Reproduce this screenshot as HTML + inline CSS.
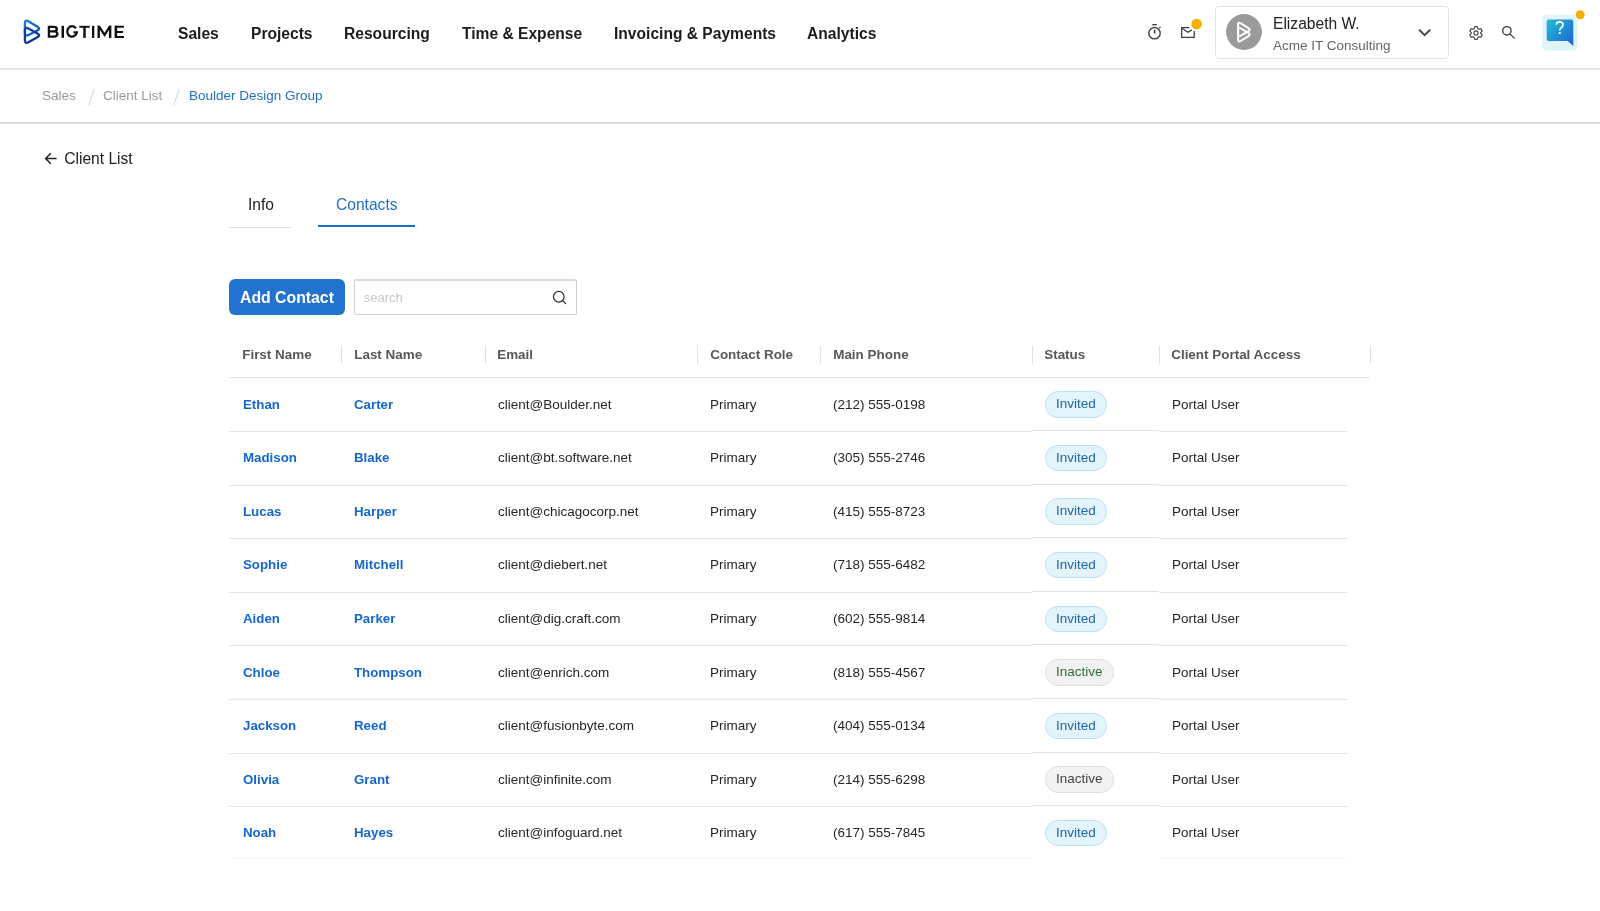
<!DOCTYPE html>
<html><head><meta charset="utf-8">
<style>
*{box-sizing:border-box;margin:0;padding:0}
html,body{width:1600px;height:911px;overflow:hidden;background:#fff;font-family:"Liberation Sans",sans-serif;color:#222}
.abs{position:absolute}
#hdr{position:absolute;left:0;top:0;width:1600px;height:70px;border-bottom:2px solid #e6e6e6;background:#fff}
.nav{position:absolute;top:24.7px;font-size:15.6px;font-weight:bold;color:#1c1c1c;white-space:nowrap;line-height:18px}
#crumb{position:absolute;left:0;top:70px;width:1600px;height:54px;border-bottom:2px solid #dedede}
.bc{position:absolute;top:88px;font-size:13.5px;color:#9a9a9a;line-height:16px;white-space:nowrap}
.sep{position:absolute;top:88.7px;width:1px;height:16px;background:#d6d6d6;transform:skewX(-19deg)}
.txt{position:absolute;white-space:nowrap}
.th{position:absolute;top:347px;margin-left:-0.8px;font-size:13.45px;font-weight:bold;color:#575757;line-height:16px;white-space:nowrap}
.vs{position:absolute;top:346px;width:1px;height:18px;background:#e3e3e3}
.row{position:absolute;left:229px;width:1119px;height:53.55px}
.hl{position:absolute;height:1px;background:#e6e6e6}
.c{position:absolute;top:-0.4px;line-height:53.55px;font-size:13.5px;white-space:nowrap;color:#262626}
.lnk{color:#1567cc;font-weight:bold;font-size:13.3px}
.badge{position:absolute;top:13.2px;height:26.4px;border-radius:13.2px;font-size:13.5px;line-height:24.4px;padding:0 10px;border:1px solid #b9e0f7;background:#e4f4fd;color:#1d64ab}
.badge.in{border-color:#dedede;background:#f2f2f2;color:#2d6b3a}
.badge.in2{border-color:#dedede;background:#f2f2f2;color:#444}
</style></head>
<body><div style="position:absolute;left:0;top:0;width:1600px;height:911px;will-change:transform">
<div id="hdr"></div>
<!-- logo -->
<svg class="abs" style="left:0;top:0" width="60" height="60" viewBox="0 0 60 60">
  <defs><linearGradient id="lg1" x1="0" y1="0" x2="1" y2="1"><stop offset="0" stop-color="#1c78dc"/><stop offset="1" stop-color="#0d4fc4"/></linearGradient>
  <linearGradient id="lg2" x1="0" y1="0" x2="1" y2="1"><stop offset="0" stop-color="#0a3fae"/><stop offset="1" stop-color="#082e9c"/></linearGradient></defs>
  <path d="M28.33,21.26 L37.47,26.74 Q40.90,28.80 37.32,30.59 L28.48,35.01 Q24.90,36.80 24.90,32.80 L24.90,23.20 Q24.90,19.20 28.33,21.26 Z" fill="none" stroke="url(#lg1)" stroke-width="2.3"/>
  <path d="M28.41,28.51 L37.39,33.39 Q40.90,35.30 37.40,37.24 L28.40,42.26 Q24.90,44.20 24.90,40.20 L24.90,30.60 Q24.90,26.60 28.41,28.51 Z" fill="none" stroke="url(#lg2)" stroke-width="2.3"/>
</svg>
<svg class="abs" style="left:40px;top:18px" width="90" height="26" viewBox="40 18 90 26">
 <defs><clipPath id="mclip"><rect x="97" y="25.8" width="15" height="13"/></clipPath></defs>
 <g fill="none" stroke="#111" stroke-width="2.3" stroke-linejoin="miter" stroke-linecap="butt">
  <path d="M48.9,26.9 H53.7 A3.15,2.25 0 0 1 53.7,31.4 H48.9 M53.7,31.4 H54 A3.45,2.6 0 0 1 54,36.6 H48.9 M48.9,25.75 V37.75"/>
  <path d="M62.75,25.8 V37.9" stroke-width="2.45"/>
  <path d="M75.95,28.25 A4.8,5.25 0 1 0 76.85,32.35 H73.5" />
  <path d="M79.35,26.8 H89.7" stroke-width="1.95"/>
  <path d="M84.5,26.8 V37.9" stroke-width="2.5"/>
  <path d="M93.15,25.8 V37.9" stroke-width="2.3"/>
  <path d="M98.7,25.8 V37.9 M110.15,25.8 V37.9" stroke-width="2.4"/>
  <path d="M98.2,25.2 L104.55,34.9 L110.65,25.2" stroke-width="2.3" clip-path="url(#mclip)"/>
  <path d="M124,26.75 H115.9 V37.05 H124 M115.9,32 H123.1" stroke-width="2"/>
  <path d="M115.9,25.75 V38.05" stroke-width="2.5"/>
 </g>
</svg>

<div class="nav" style="left:178px">Sales</div>
<div class="nav" style="left:251px">Projects</div>
<div class="nav" style="left:344px">Resourcing</div>
<div class="nav" style="left:462px">Time &amp; Expense</div>
<div class="nav" style="left:614px">Invoicing &amp; Payments</div>
<div class="nav" style="left:807px">Analytics</div>

<!-- right icons -->
<svg class="abs" style="left:1100px;top:0" width="500" height="70" viewBox="1100 0 500 70">
  <!-- timer -->
  <circle cx="1154.5" cy="33.2" r="5.7" fill="none" stroke="#404040" stroke-width="1.4"/>
  <line x1="1152.3" y1="24.7" x2="1156.8" y2="24.7" stroke="#404040" stroke-width="1.4"/>
  <line x1="1154.6" y1="29.8" x2="1154.6" y2="33.6" stroke="#404040" stroke-width="1.5"/>
  <line x1="1159" y1="28.4" x2="1160.6" y2="26.9" stroke="#404040" stroke-width="1.3"/>
  <!-- mail -->
  <path d="M1189.5,27.6 L1181.7,27.6 L1181.7,37.4 L1194.2,37.4 L1194.2,31" fill="none" stroke="#404040" stroke-width="1.3"/>
  <path d="M1182,28.3 L1187.9,32.3 L1191.8,29.9" fill="none" stroke="#404040" stroke-width="1.3"/>
  <circle cx="1196.65" cy="24.05" r="5.95" fill="#f4af00" stroke="#fff" stroke-width="1.2"/>
  <!-- avatar -->
  <circle cx="1244" cy="32" r="17.9" fill="#9a9a9a"/>
  <path d="M1240.64,23.20 L1248.46,28.10 Q1251.00,29.70 1248.41,31.21 L1240.69,35.69 Q1238.10,37.20 1238.10,34.20 L1238.10,24.60 Q1238.10,21.60 1240.64,23.20 Z" fill="none" stroke="#fff" stroke-width="2"/>
  <path d="M1240.68,28.42 L1248.42,32.98 Q1251.00,34.50 1248.46,36.10 L1240.64,41.00 Q1238.10,42.60 1238.10,39.60 L1238.10,29.90 Q1238.10,26.90 1240.68,28.42 Z" fill="none" stroke="#fff" stroke-width="2"/>
  <!-- chevron -->
  <path d="M1419,29.6 L1424.6,35.2 L1430.3,29.6" fill="none" stroke="#444" stroke-width="2"/>
  <!-- gear -->
  <path d="M1474.30,28.00 L1474.75,26.60 L1477.25,26.60 L1477.70,28.00 L1478.28,29.06 L1479.48,29.03 L1480.92,28.72 L1482.17,30.88 L1481.18,31.97 L1480.55,33.00 L1481.18,34.03 L1482.17,35.12 L1480.92,37.28 L1479.48,36.97 L1478.28,36.94 L1477.70,38.00 L1477.25,39.40 L1474.75,39.40 L1474.30,38.00 L1473.72,36.94 L1472.52,36.97 L1471.08,37.28 L1469.83,35.12 L1470.82,34.03 L1471.45,33.00 L1470.82,31.97 L1469.83,30.88 L1471.08,28.72 L1472.52,29.03 L1473.72,29.06 Z" fill="none" stroke="#4a4a4a" stroke-width="1.25" stroke-linejoin="round"/>
  <circle cx="1476" cy="33" r="2.1" fill="none" stroke="#4a4a4a" stroke-width="1.2"/>
  <!-- search -->
  <circle cx="1506.9" cy="30.8" r="4.2" fill="none" stroke="#404040" stroke-width="1.35"/>
  <line x1="1510" y1="34" x2="1514.3" y2="38.1" stroke="#404040" stroke-width="1.3" stroke-linecap="round"/>
  <!-- help -->
  <defs><linearGradient id="hg" x1="0" y1="0" x2="1" y2="1"><stop offset="0" stop-color="#25bcd6"/><stop offset="1" stop-color="#1a62d4"/></linearGradient></defs>
  <rect x="1542" y="14.8" width="36" height="36" rx="5" fill="#e3f3fc"/>
  <path d="M1548.7,19.45 L1571.3,19.45 Q1573.3,19.45 1573.3,21.45 L1573.3,46 L1567.8,41.1 L1548.7,41.1 Q1546.7,41.1 1546.7,39.1 L1546.7,21.45 Q1546.7,19.45 1548.7,19.45 Z" fill="url(#hg)"/>
  <path d="M1556.3,24.6 Q1556.6,21.9 1559.6,21.9 Q1562.9,21.9 1562.9,24.8 Q1562.9,26.6 1561.2,27.7 Q1559.7,28.7 1559.7,30.6" fill="none" stroke="#fff" stroke-width="1.7"/>
  <rect x="1558.8" y="32" width="1.9" height="2" fill="#fff"/>
  <circle cx="1580.2" cy="14.8" r="5.1" fill="#f4af00" stroke="#fff" stroke-width="1.2"/>
</svg>

<!-- user box -->
<div class="abs" style="left:1215px;top:6px;width:234px;height:53px;border:1px solid #e3e3e3;border-radius:4px"></div>
<div class="txt" style="left:1273px;top:15.1px;font-size:15.6px;color:#222;line-height:18px">Elizabeth W.</div>
<div class="txt" style="left:1273px;top:38px;font-size:13.5px;color:#666;line-height:16px">Acme IT Consulting</div>

<div id="crumb"></div>
<div class="bc" style="left:42px">Sales</div>
<div class="sep" style="left:91px"></div>
<div class="bc" style="left:103px">Client List</div>
<div class="sep" style="left:176px"></div>
<div class="bc" style="left:189px;color:#2070c8">Boulder Design Group</div>

<!-- back link -->
<div class="txt" style="left:64.2px;top:150.4px;font-size:15.6px;color:#222;line-height:18px">Client List</div>

<!-- tabs -->
<div class="txt" style="left:248px;top:196px;font-size:15.6px;color:#222;line-height:18px">Info</div>
<div class="abs" style="left:229px;top:227px;width:63px;height:1px;background:#e4e4e4"></div>
<div class="txt" style="left:336px;top:196px;font-size:15.6px;color:#2070c8;line-height:18px">Contacts</div>
<div class="abs" style="left:318px;top:225px;width:97px;height:2px;background:#1f6dd0"></div>

<!-- add contact -->
<div class="abs" style="left:229px;top:279.3px;width:116px;height:35.5px;border-radius:6px;background:#2273d0"></div>
<div class="txt" style="left:240px;top:288.9px;font-size:15.8px;font-weight:bold;color:#fff;line-height:18px">Add Contact</div>
<div class="abs" style="left:354px;top:279px;width:223px;height:36px;border:1px solid #d0d0d0;border-top:2px solid #dcdcdc;border-radius:2px"></div>
<div class="txt" style="left:363.7px;top:290px;font-size:13px;color:#c6c6c6;line-height:16px">search</div>

<svg class="abs" style="left:0;top:0;pointer-events:none" width="600" height="330" viewBox="0 0 600 330">
  <path d="M45.6,158.5 L56.6,158.5 M50.8,153.3 L45.6,158.5 L50.8,163.7" fill="none" stroke="#222" stroke-width="1.5"/>
  <circle cx="558.8" cy="296.7" r="5.3" fill="none" stroke="#333" stroke-width="1.25"/>
  <line x1="562.5" y1="300.5" x2="565.7" y2="303.6" stroke="#333" stroke-width="1.3" stroke-linecap="round"/>
</svg>
<!-- table header -->
<div class="th" style="left:243px">First Name</div>
<div class="vs" style="left:341px"></div>
<div class="th" style="left:355px">Last Name</div>
<div class="vs" style="left:485px"></div>
<div class="th" style="left:498px">Email</div>
<div class="vs" style="left:697px"></div>
<div class="th" style="left:711px">Contact Role</div>
<div class="vs" style="left:820px"></div>
<div class="th" style="left:834px">Main Phone</div>
<div class="vs" style="left:1032px"></div>
<div class="th" style="left:1045px">Status</div>
<div class="vs" style="left:1159px"></div>
<div class="th" style="left:1172px">Client Portal Access</div>
<div class="vs" style="left:1370px"></div>
<div class="abs" style="left:229px;top:377px;width:1141px;height:1px;background:#e3e3e3"></div>

<div class="row" style="top:378.20px"><div class="c lnk" style="left:14px">Ethan</div><div class="c lnk" style="left:125px">Carter</div><div class="c" style="left:269px">client@Boulder.net</div><div class="c" style="left:481px">Primary</div><div class="c" style="left:604px">(212) 555-0198</div><div class="badge" style="left:816px">Invited</div><div class="c" style="left:943px">Portal User</div></div>
<div class="row" style="top:431.75px"><div class="c lnk" style="left:14px">Madison</div><div class="c lnk" style="left:125px">Blake</div><div class="c" style="left:269px">client@bt.software.net</div><div class="c" style="left:481px">Primary</div><div class="c" style="left:604px">(305) 555-2746</div><div class="badge" style="left:816px">Invited</div><div class="c" style="left:943px">Portal User</div></div>
<div class="row" style="top:485.30px"><div class="c lnk" style="left:14px">Lucas</div><div class="c lnk" style="left:125px">Harper</div><div class="c" style="left:269px">client@chicagocorp.net</div><div class="c" style="left:481px">Primary</div><div class="c" style="left:604px">(415) 555-8723</div><div class="badge" style="left:816px">Invited</div><div class="c" style="left:943px">Portal User</div></div>
<div class="row" style="top:538.85px"><div class="c lnk" style="left:14px">Sophie</div><div class="c lnk" style="left:125px">Mitchell</div><div class="c" style="left:269px">client@diebert.net</div><div class="c" style="left:481px">Primary</div><div class="c" style="left:604px">(718) 555-6482</div><div class="badge" style="left:816px">Invited</div><div class="c" style="left:943px">Portal User</div></div>
<div class="row" style="top:592.40px"><div class="c lnk" style="left:14px">Aiden</div><div class="c lnk" style="left:125px">Parker</div><div class="c" style="left:269px">client@dig.craft.com</div><div class="c" style="left:481px">Primary</div><div class="c" style="left:604px">(602) 555-9814</div><div class="badge" style="left:816px">Invited</div><div class="c" style="left:943px">Portal User</div></div>
<div class="row" style="top:645.95px"><div class="c lnk" style="left:14px">Chloe</div><div class="c lnk" style="left:125px">Thompson</div><div class="c" style="left:269px">client@enrich.com</div><div class="c" style="left:481px">Primary</div><div class="c" style="left:604px">(818) 555-4567</div><div class="badge in" style="left:816px">Inactive</div><div class="c" style="left:943px">Portal User</div></div>
<div class="row" style="top:699.50px"><div class="c lnk" style="left:14px">Jackson</div><div class="c lnk" style="left:125px">Reed</div><div class="c" style="left:269px">client@fusionbyte.com</div><div class="c" style="left:481px">Primary</div><div class="c" style="left:604px">(404) 555-0134</div><div class="badge" style="left:816px">Invited</div><div class="c" style="left:943px">Portal User</div></div>
<div class="row" style="top:753.05px"><div class="c lnk" style="left:14px">Olivia</div><div class="c lnk" style="left:125px">Grant</div><div class="c" style="left:269px">client@infinite.com</div><div class="c" style="left:481px">Primary</div><div class="c" style="left:604px">(214) 555-6298</div><div class="badge in2" style="left:816px">Inactive</div><div class="c" style="left:943px">Portal User</div></div>
<div class="row" style="top:806.60px"><div class="c lnk" style="left:14px">Noah</div><div class="c lnk" style="left:125px">Hayes</div><div class="c" style="left:269px">client@infoguard.net</div><div class="c" style="left:481px">Primary</div><div class="c" style="left:604px">(617) 555-7845</div><div class="badge" style="left:816px">Invited</div><div class="c" style="left:943px">Portal User</div></div>
<div class="hl" style="left:229px;top:431.20px;width:803px"></div>
<div class="hl" style="left:1032px;top:430.20px;width:127px;background:#e2e2e2"></div>
<div class="hl" style="left:1159px;top:431.20px;width:189px"></div>
<div class="hl" style="left:229px;top:484.75px;width:803px"></div>
<div class="hl" style="left:1032px;top:483.75px;width:127px;background:#e2e2e2"></div>
<div class="hl" style="left:1159px;top:484.75px;width:189px"></div>
<div class="hl" style="left:229px;top:538.30px;width:803px"></div>
<div class="hl" style="left:1032px;top:537.30px;width:127px;background:#e2e2e2"></div>
<div class="hl" style="left:1159px;top:538.30px;width:189px"></div>
<div class="hl" style="left:229px;top:591.85px;width:803px"></div>
<div class="hl" style="left:1032px;top:590.85px;width:127px;background:#e2e2e2"></div>
<div class="hl" style="left:1159px;top:591.85px;width:189px"></div>
<div class="hl" style="left:229px;top:645.40px;width:803px"></div>
<div class="hl" style="left:1032px;top:644.40px;width:127px;background:#e2e2e2"></div>
<div class="hl" style="left:1159px;top:645.40px;width:189px"></div>
<div class="hl" style="left:229px;top:698.95px;width:803px"></div>
<div class="hl" style="left:1032px;top:697.95px;width:127px;background:#e2e2e2"></div>
<div class="hl" style="left:1159px;top:698.95px;width:189px"></div>
<div class="hl" style="left:229px;top:752.50px;width:803px"></div>
<div class="hl" style="left:1032px;top:751.50px;width:127px;background:#e2e2e2"></div>
<div class="hl" style="left:1159px;top:752.50px;width:189px"></div>
<div class="hl" style="left:229px;top:806.05px;width:803px"></div>
<div class="hl" style="left:1032px;top:805.05px;width:127px;background:#e2e2e2"></div>
<div class="hl" style="left:1159px;top:806.05px;width:189px"></div>
<div class="hl" style="left:229px;top:858.3px;width:803px;background:#f6f6f6"></div>
<div class="hl" style="left:1159px;top:858.3px;width:189px;background:#f6f6f6"></div>
</div></body></html>
